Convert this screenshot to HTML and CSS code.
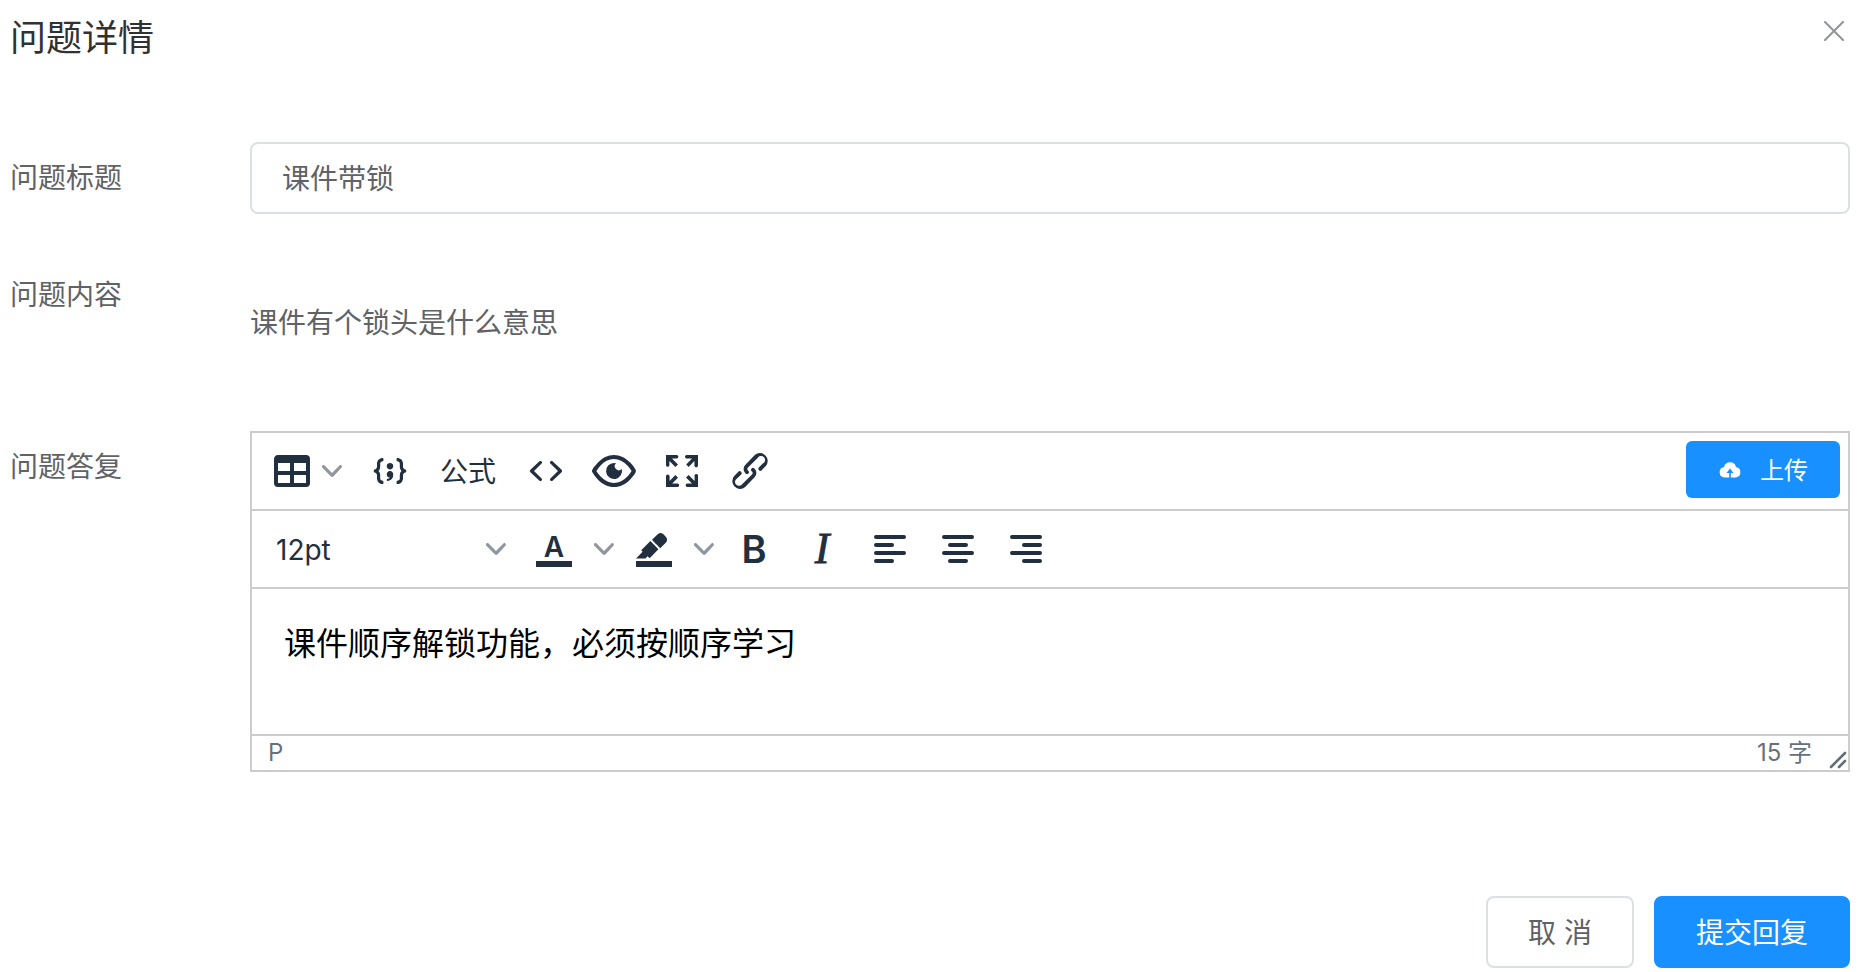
FILE: index.html
```
<!DOCTYPE html>
<html lang="zh-CN">

<head>
    <meta charset="UTF-8">
    <meta name="viewport" content="width=device-width, initial-scale=1.0">
    <title>问题详情</title>
    <link rel="stylesheet" href="styles.css">
</head>

<body>
    <div class="dialog" role="dialog" aria-labelledby="dialogTitle">
        <header class="dialog-header">
            <h1 class="dialog-title" id="dialogTitle">问题详情</h1>
            <button type="button" class="dialog-close" aria-label="关闭">
                <svg width="20" height="20" viewBox="0 0 20 20"><path d="M1 1l18 18M19 1L1 19" fill="none" stroke="currentColor" stroke-width="2" stroke-linecap="round"/></svg>
            </button>
        </header>

        <form class="form">
            <div class="form-item">
                <label class="form-label" for="questionTitle">问题标题</label>
                <input class="form-input" id="questionTitle" type="text" value="课件带锁">
            </div>

            <div class="form-item">
                <span class="form-label">问题内容</span>
                <p class="question-text">课件有个锁头是什么意思</p>
            </div>

            <div class="form-item">
                <span class="form-label" id="answerLabel">问题答复</span>
                <div class="editor">
                    <!-- first toolbar row -->
                    <div class="toolbar">
                        <button type="button" class="tool tool-select" aria-label="表格">
                            <svg class="icon" viewBox="0 0 24 24"><path d="M19 4a2 2 0 012 2v12a2 2 0 01-2 2H5a2 2 0 01-2-2V6c0-1.1.9-2 2-2h14zM5 14v4h6v-4H5zm14 0h-6v4h6v-4zm0-6h-6v4h6V8zM5 12h6V8H5v4z"/></svg>
                            <span class="chevron-box"><svg class="chevron" viewBox="0 0 10 10"><path d="M8.7 2.2c.3-.3.8-.3 1 0 .4.4.4.9 0 1.2L5.7 7.8c-.3.3-.9.3-1.2 0L.2 3.4a.8.8 0 010-1.2c.3-.3.8-.3 1.1 0L5 6l3.7-3.8z"/></svg></span>
                        </button>
                        <button type="button" class="tool" aria-label="代码示例">
                            <svg class="icon" viewBox="0 0 24 24"><path d="M7.1 10a2.8 2.8 0 01-.8 2 2.8 2.8 0 01.8 2v1.7c0 .3.1.6.4.8.2.3.5.4.8.4.3 0 .4.2.4.4v.8c0 .2-.1.4-.4.4-.7 0-1.4-.3-2-.8-.5-.6-.8-1.3-.8-2V14c0-.3-.1-.6-.4-.8-.2-.3-.5-.4-.8-.4a.4.4 0 01-.4-.4v-.8c0-.2.2-.4.4-.4.3 0 .6-.1.8-.4.3-.2.4-.5.4-.8V8.300c0-.7.3-1.400.8-2 .6-.5 1.300-.8 2-.8.3 0 .4.2.4.4v.8c0 .2-.1.4-.4.4-.3 0-.6.1-.8.4-.3.2-.4.5-.4.8V10zm9.800 0V8.300c0-.3-.1-.6-.4-.8-.2-.3-.5-.4-.8-.4a.4.4 0 01-.4-.4v-.8c0-.2.1-.4.4-.4.7 0 1.400.3 2 .8.5.6.8 1.300.8 2V10c0 .3.1.6.4.8.2.3.5.4.8.4.2 0 .4.2.4.4v.8c0 .2-.2.4-.4.4-.3 0-.6.1-.8.4-.3.2-.4.5-.4.8v1.700c0 .7-.3 1.400-.8 2-.6.5-1.300.8-2 .8a.4.4 0 01-.4-.4v-.8c0-.2.1-.4.4-.4.3 0 .6-.1.8-.4.3-.2.4-.5.4-.8V14a2.800 2.800 0 01.8-2 2.800 2.800 0 01-.8-2zm-3.300-.4c0 .4-.1.8-.5 1.100-.3.3-.7.5-1.100.5-.4 0-.8-.2-1.100-.5-.4-.3-.5-.7-.5-1.100 0-.5.1-.9.5-1.200.3-.3.7-.4 1.100-.4.4 0 .8.1 1.100.4.4.3.5.7.5 1.200zM12 12c.4 0 .8.1 1.100.5.4.3.5.7.5 1.100 0 1-.1 1.600-.5 2a3 3 0 01-1.100 1c-.4.3-.8.4-1.100.4a.5.5 0 01-.5-.5v-.5a3 3 0 001-.2l.6-.6c-.6 0-1-.2-1.300-.5-.2-.3-.3-.7-.3-1 0-.5.1-1 .5-1.200.3-.4.7-.5 1.100-.5z"/></svg>
                        </button>
                        <button type="button" class="tool tool-text">公式</button>
                        <button type="button" class="tool" aria-label="源代码">
                            <svg class="icon" viewBox="0 0 24 24"><path d="M9.8 15.7c.3.3.3.8 0 1-.3.4-.9.4-1.2 0l-4.4-4.1a.8.8 0 010-1.2l4.4-4.2c.3-.3.9-.3 1.2 0 .3.3.3.8 0 1.1L6 12l3.8 3.7zM14.2 15.7c-.3.3-.3.8 0 1 .4.4.9.4 1.2 0l4.4-4.1c.3-.3.3-.8 0-1.2l-4.4-4.2a.8.8 0 00-1.2 0c-.3.3-.3.8 0 1.1L18 12l-3.8 3.7z"/></svg>
                        </button>
                        <button type="button" class="tool" aria-label="预览">
                            <svg class="icon" viewBox="0 0 24 24"><path d="M3.5 12.5c.5.8 1.1 1.6 1.8 2.3 2 2 4.2 3.2 6.7 3.2s4.7-1.2 6.7-3.2a16.2 16.2 0 002.1-2.8 15.7 15.7 0 00-2.1-2.8c-2-2-4.2-3.2-6.7-3.2a9.3 9.3 0 00-6.7 3.2A16.2 16.2 0 003.2 12c0 .2.2.3.3.5zm-2.4-1l.7-1.2L4 7.8C6.2 5.4 8.9 4 12 4c3 0 5.8 1.4 8.1 3.8a18.2 18.2 0 012.8 3.7v1l-.7 1.2-2.1 2.5c-2.3 2.4-5 3.8-8.1 3.8-3 0-5.8-1.4-8.1-3.8a18.2 18.2 0 01-2.8-3.7 1 1 0 010-1zM12 8l1 .1a2 2 0 102.9 2.9A4 4 0 1112 8z"/></svg>
                        </button>
                        <button type="button" class="tool" aria-label="全屏">
                            <svg class="icon" viewBox="0 0 24 24"><path d="M15.3 10l-1.2-1.3 2.9-3h-2.3a.9.9 0 110-1.7H20v5.3a.9.9 0 11-1.8 0V7l-2.9 3zm0 4l3 3v-2.3a.9.9 0 111.7 0V20h-5.3a.9.9 0 110-1.8H17l-3-2.9 1.3-1.3zM10 15.4l-2.9 2.9h2.3a.9.9 0 110 1.7H4v-5.3a.9.9 0 111.8 0V17l2.9-3 1.3 1.4zM8.7 10L5.7 7v2.3a.9.9 0 01-1.7 0V4h5.3a.9.9 0 010 1.8H7l3 2.9L8.7 10z"/></svg>
                        </button>
                        <button type="button" class="tool" aria-label="链接">
                            <svg class="icon" viewBox="0 0 24 24"><path d="M6.2 12.3a1 1 0 011.4 1.4l-2.1 2a2 2 0 102.7 2.8l4.8-4.8a1 1 0 000-1.4 1 1 0 111.4-1.3 2.9 2.9 0 010 4L9.6 20a3.9 3.9 0 01-5.5-5.5l2-2zm11.6-.6a1 1 0 01-1.4-1.4l2-2a2 2 0 10-2.6-2.8L11 10.3a1 1 0 000 1.4A1 1 0 119.6 13a2.9 2.9 0 010-4L14.4 4a3.9 3.9 0 015.5 5.5l-2 2z"/></svg>
                        </button>
                        <button type="button" class="upload-btn">
                            <svg width="24" height="24" viewBox="0 0 24 24"><path d="M6.500 20.500h4.700v-4.500H8.500L12 11.500l3.500 4.500h-2.700v4.500h4.700a5.300 5.300 0 00.5-10.500 6.200 6.200 0 00-12 0 5.300 5.300 0 00.5 10.500z"/></svg>
                            <span>上传</span>
                        </button>
                    </div>

                    <!-- second toolbar row -->
                    <div class="toolbar">
                        <div class="font-size">
                            <select class="font-size-select" aria-label="字号">
                                <option>8pt</option>
                                <option>10pt</option>
                                <option selected>12pt</option>
                                <option>14pt</option>
                                <option>18pt</option>
                            </select>
                            <svg class="chevron" viewBox="0 0 10 10"><path d="M8.7 2.2c.3-.3.8-.3 1 0 .4.4.4.9 0 1.2L5.7 7.8c-.3.3-.9.3-1.2 0L.2 3.4a.8.8 0 010-1.2c.3-.3.8-.3 1.1 0L5 6l3.7-3.8z"/></svg>
                        </div>
                        <button type="button" class="tool" aria-label="文字颜色">
                            <svg class="icon" viewBox="0 0 24 24"><path d="M3 18h18v3H3z"/><text class="glyph-a" x="12" y="16">A</text></svg>
                        </button>
                        <button type="button" class="chevron-box" aria-label="选择文字颜色">
                            <svg class="chevron" viewBox="0 0 10 10"><path d="M8.7 2.2c.3-.3.8-.3 1 0 .4.4.4.9 0 1.2L5.7 7.8c-.3.3-.9.3-1.2 0L.2 3.4a.8.8 0 010-1.2c.3-.3.8-.3 1.1 0L5 6l3.7-3.8z"/></svg>
                        </button>
                        <button type="button" class="tool" aria-label="背景颜色">
                            <svg class="icon" viewBox="0 0 24 24"><path d="M3 18h18v3H3z"/><path d="M7.7 16.7H3l3.3-3.3-.7-.8L10.2 8l4 4.1-4 4.2c-.2.2-.6.2-.8 0l-.6-.7-1.1 1.1zm5-7.5L11 7.4l3-2.9a2 2 0 012.6 0L18 6c.7.7.7 2 0 2.7l-2.9 2.9-1.8-1.8-.6-.6z"/></svg>
                        </button>
                        <button type="button" class="chevron-box" aria-label="选择背景颜色">
                            <svg class="chevron" viewBox="0 0 10 10"><path d="M8.7 2.2c.3-.3.8-.3 1 0 .4.4.4.9 0 1.2L5.7 7.8c-.3.3-.9.3-1.2 0L.2 3.4a.8.8 0 010-1.2c.3-.3.8-.3 1.1 0L5 6l3.7-3.8z"/></svg>
                        </button>
                        <button type="button" class="tool" aria-label="粗体">
                            <svg class="icon" viewBox="0 0 24 24"><text class="glyph-b" x="12" y="19">B</text></svg>
                        </button>
                        <button type="button" class="tool" aria-label="斜体">
                            <svg class="icon" viewBox="0 0 24 24"><text class="glyph-i" x="12" y="19">I</text></svg>
                        </button>
                        <button type="button" class="tool" aria-label="左对齐">
                            <svg class="icon" viewBox="0 0 24 24"><path d="M5 5h14a1 1 0 010 2H5a1 1 0 010-2zm0 4h8a1 1 0 010 2H5a1 1 0 010-2zm0 4h14a1 1 0 010 2H5a1 1 0 010-2zm0 4h8a1 1 0 010 2H5a1 1 0 010-2z"/></svg>
                        </button>
                        <button type="button" class="tool" aria-label="居中对齐">
                            <svg class="icon" viewBox="0 0 24 24"><path d="M5 5h14a1 1 0 010 2H5a1 1 0 010-2zm3 4h8a1 1 0 010 2H8a1 1 0 010-2zm-3 4h14a1 1 0 010 2H5a1 1 0 010-2zm3 4h8a1 1 0 010 2H8a1 1 0 010-2z"/></svg>
                        </button>
                        <button type="button" class="tool" aria-label="右对齐">
                            <svg class="icon" viewBox="0 0 24 24"><path d="M5 5h14a1 1 0 010 2H5a1 1 0 010-2zm6 4h8a1 1 0 010 2h-8a1 1 0 010-2zm-6 4h14a1 1 0 010 2H5a1 1 0 010-2zm6 4h8a1 1 0 010 2h-8a1 1 0 010-2z"/></svg>
                        </button>
                    </div>

                    <div class="editor-body" contenteditable="true" role="textbox" aria-multiline="true" aria-labelledby="answerLabel">
                        <p>课件顺序解锁功能，必须按顺序学习</p>
                    </div>

                    <div class="statusbar">
                        <span class="status-path">P</span>
                        <span class="status-count">15 字</span>
                        <svg class="resize-handle" viewBox="0 0 10 10"><path d="M1.5 8.5l7-7M5.5 8.5l3-3" fill="none" stroke="currentColor" stroke-width="1.3" stroke-linecap="round"/></svg>
                    </div>
                </div>
            </div>

            <footer class="dialog-footer">
                <button type="button" class="btn">取 消</button>
                <button type="submit" class="btn btn-primary">提交回复</button>
            </footer>
        </form>
    </div>
</body>

</html>
```

FILE: styles.css
```
* {
    box-sizing: border-box;
}

body {
    margin: 0;
    background-color: #fff;
    color: #606266;
    font-family: Inter, "Noto Sans CJK SC", sans-serif;
    font-size: 28px;
}

button,
input,
select {
    font-family: inherit;
    font-size: inherit;
}

button {
    margin: 0;
    padding: 0;
    border: none;
    background: transparent;
    cursor: pointer;
}

svg {
    display: block;
    fill: currentColor;
}

.dialog {
    padding: 12px 18px 4px 10px;
}

/* Header */
.dialog-header {
    display: flex;
    justify-content: space-between;
    align-items: flex-start;
    margin-bottom: 78px;
}

.dialog-title {
    margin: 0;
    color: #303133;
    font-size: 36px;
    font-weight: 400;
    line-height: 52px;
}

.dialog-close {
    padding: 9px 6px;
    color: #909399;
}

/* Form rows */
.form-item {
    display: grid;
    grid-template-columns: 240px minmax(0, 1fr);
    align-items: start;
    margin-bottom: 45px;
}

.form-label {
    line-height: 72px;
}

.form-input {
    width: 100%;
    height: 72px;
    padding: 0 30px 2px;
    border: 2px solid #dcdfe6;
    border-radius: 8px;
    background-color: #fff;
    color: #606266;
    outline: none;
}

.question-text {
    margin: 28px 0 27px;
    line-height: 72px;
}

/* Editor */
.editor {
    border: 2px solid #ccc;
    color: #222f3e;
}

.toolbar {
    display: flex;
    align-items: center;
    height: 78px;
    padding: 0 8px;
    border-bottom: 2px solid #ccc;
}

.tool {
    display: flex;
    align-items: center;
    justify-content: center;
    width: 68px;
    height: 68px;
    color: #222f3e;
}

.tool-select {
    width: 96px;
}

.tool-text {
    width: auto;
    padding: 0 16px 2px;
}

.icon {
    width: 48px;
    height: 48px;
}

.chevron-box {
    display: flex;
    align-items: center;
    justify-content: center;
    width: 32px;
    height: 68px;
    color: #222f3e;
}

.chevron {
    width: 20px;
    height: 20px;
    opacity: 0.5;
}

/* Letters inside the 24-unit icon grid */
.glyph-a,
.glyph-b,
.glyph-i {
    text-anchor: middle;
}

.glyph-a {
    font-size: 14px;
    font-weight: 600;
}

.glyph-b {
    font-size: 19px;
    font-weight: 600;
}

.glyph-i {
    font-family: "Liberation Serif", serif;
    font-size: 22px;
    font-style: italic;
    stroke: currentColor;
    stroke-width: 0.4;
}

.font-size {
    display: flex;
    align-items: center;
    width: 260px;
    padding: 0 14px 0 16px;
}

.font-size-select {
    flex: 1;
    height: 68px;
    padding: 2px 0 0;
    border: none;
    background: transparent;
    color: #222f3e;
    appearance: none;
    outline: none;
}

.upload-btn {
    display: flex;
    align-items: center;
    gap: 18px;
    height: 57px;
    margin: 0 0 3px auto;
    padding: 0 32px 2px;
    border-radius: 6px;
    background-color: #1890ff;
    color: #fff;
    font-size: 24px;
}

.editor-body {
    min-height: 145px;
    padding: 32px;
    color: #000;
    font-size: 32px;
    line-height: 45px;
    outline: none;
}

.editor-body p {
    margin: 0;
}

.statusbar {
    display: flex;
    align-items: center;
    height: 36px;
    padding-left: 16px;
    border-top: 2px solid #ccc;
    color: #222f3eb3;
    font-size: 24px;
    line-height: 32px;
}

.status-count {
    margin-left: auto;
    margin-right: 16px;
}

.resize-handle {
    align-self: flex-end;
    width: 20px;
    height: 20px;
}

/* Footer */
.dialog-footer {
    display: flex;
    justify-content: flex-end;
    gap: 20px;
    padding-top: 79px;
}

.btn {
    height: 72px;
    padding: 0 40px 2px;
    border: 2px solid #dcdfe6;
    border-radius: 8px;
    background-color: #fff;
    color: #606266;
}

.btn-primary {
    border-color: #1890ff;
    background-color: #1890ff;
    color: #fff;
}
```
